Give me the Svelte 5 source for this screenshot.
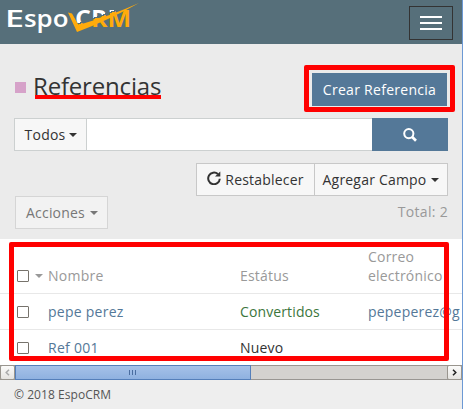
<script>
  const rows = [
    { name: 'pepe perez', status: 'Convertidos', done: true, email: 'pepeperez@g' },
    { name: 'Ref 001', status: 'Nuevo', done: false, email: '' }
  ];
</script>

<div class="app">
  <header>
    <svg class="logo" width="140" height="36" viewBox="0 0 140 36">
      <defs>
        <linearGradient id="split" gradientUnits="userSpaceOnUse" x1="102.4" y1="7.6" x2="107.6" y2="22.4">
          <stop offset="0.42" stop-color="#fff" />
          <stop offset="0.42" stop-color="#566f7a" />
          <stop offset="0.5" stop-color="#566f7a" />
          <stop offset="0.5" stop-color="#ffab0b" />
        </linearGradient>
      </defs>
      <text x="5" y="26.5" textLength="19" lengthAdjust="spacingAndGlyphs" class="word">E</text>
      <text x="24" y="26.5" textLength="44.5" lengthAdjust="spacingAndGlyphs" class="word small">spo</text>
      <text x="75" y="27" textLength="56" lengthAdjust="spacingAndGlyphs" class="word crm" fill="url(#split)">CRM</text>
      <path d="M68 12.5 L72 13.5 L78.5 25 Q110 16 139 3 Q109 20 77 32 Z" fill="#ffab0b" />
    </svg>
    <button class="menu" aria-label="Menu"><i></i><i></i><i></i></button>
  </header>

  <main>
    <div class="heading">
      <span class="square"></span>
      <h1>Referencias</h1>
      <button class="btn primary create">Crear Referencia</button>
    </div>

    <div class="search">
      <button class="btn todos">Todos<b class="caret"></b></button>
      <input aria-label="Buscar" />
      <button class="btn primary find" aria-label="Buscar">
        <svg width="14" height="14" viewBox="0 0 14 14" fill="none" stroke="#fff">
          <circle cx="5.8" cy="5.6" r="4.6" stroke-width="2" />
          <path d="M9.2 9 L13 12.8" stroke-width="2.7" />
        </svg>
      </button>
    </div>

    <div class="filters">
      <button class="btn reset">
        <svg width="14" height="14" viewBox="0 0 14 14">
          <path d="M10.9 3.1 A5.8 5.8 0 1 0 12.8 7.8" fill="none" stroke="#333" stroke-width="2" />
          <path d="M13.3 0.4 V5.6 H8 Z" fill="#333" />
        </svg>
        <span>Restablecer</span>
      </button>
      <button class="btn add">Agregar Campo<b class="caret"></b></button>
    </div>

    <div class="actions">
      <button class="btn muted">Acciones<b class="caret"></b></button>
      <span class="total">Total: 2</span>
    </div>
  </main>

  <section class="list">
    <div class="row head">
      <span class="check"><i class="box"></i><b class="caret"></b></span>
      <span class="name">Nombre</span>
      <span class="status">Estátus</span>
      <span class="email">Correo<br />electrónico</span>
    </div>
    {#each rows as r}
      <div class="row">
        <span class="check"><i class="box"></i></span>
        <span class="name link">{r.name}</span>
        <span class="status" class:done={r.done}>{r.status}</span>
        <span class="email link">{r.email}</span>
      </div>
    {/each}
  </section>

  <div class="scrollbar">
    <span class="arrow left"><svg width="5" height="7" viewBox="0 0 5 7"><path d="M4 .7 L1.2 3.5 L4 6.3" /></svg></span>
    <span class="thumb"><i></i><i></i><i></i></span>
    <span class="arrow right"><svg width="5" height="7" viewBox="0 0 5 7"><path d="M1 .7 L3.8 3.5 L1 6.3" /></svg></span>
  </div>

  <footer>© 2018 EspoCRM</footer>

  <div class="edge"></div>
  <div class="mark underline"></div>
  <div class="mark frame-button"></div>
  <div class="mark frame-list"></div>
</div>

<style>
  :global(body) { margin: 0; }
  .app {
    position: relative;
    display: flex;
    flex-direction: column;
    width: 463px;
    height: 409px;
    box-sizing: border-box;
    overflow: hidden;
    background: #ebebeb;
    color: #333;
    font: 14px/19px "Open Sans", sans-serif;
    letter-spacing: 0.2px;
  }
  .app * { box-sizing: border-box; }
  button, input { font: inherit; letter-spacing: inherit; margin: 0; border-radius: 0; }
  header {
    flex: none;
    display: flex;
    justify-content: space-between;
    height: 44px;
    padding: 0 10px 0 0;
    background: #566f7a;
  }
  .word { font: 600 24px "Open Sans", sans-serif; letter-spacing: 0; fill: #fff; }
  .small { font-size: 23px; }
  .crm { font-weight: 700; fill: url(#split); }
  .menu {
    display: flex;
    flex-direction: column;
    align-items: center;
    gap: 4px;
    width: 44px;
    height: 34px;
    margin-top: 6px;
    padding: 9px 0 0;
    border: 1px solid #333;
    background: none;
  }
  .menu i { width: 22px; height: 2px; background: #fff; }
  main { flex: none; height: 195px; padding: 29px 15px 0 14px; }
  .heading { display: flex; height: 33px; padding-right: 1px; }
  .square { width: 11px; height: 11px; margin: 9px 7px 0 1px; background: #d6a2c9; }
  h1 { margin: -5px 0 0; font-size: 24px; line-height: 35px; font-weight: 400; letter-spacing: -0.18px; }
  .btn {
    display: flex;
    align-items: center;
    justify-content: center;
    height: 33px;
    padding: 0;
    border: 1px solid #c8c8c8;
    background: #f7f7f7;
    color: #333;
    white-space: nowrap;
  }
  .primary { border: 0; background: #547898; color: #fff; }
  .create { width: 135px; margin-left: auto; letter-spacing: 0.28px; }
  .caret {
    flex: none;
    width: 0;
    height: 0;
    margin-left: 5px;
    border: 4px solid transparent;
    border-top-color: currentColor;
    border-bottom: 0;
  }
  .search { display: flex; margin-top: 12px; }
  .todos { width: 73px; padding-left: 1px; border-color: #ccd0d0; }
  .todos .caret { margin-left: 4px; }
  .search input {
    width: 285px;
    height: 33px;
    padding: 0 8px;
    border: 1px solid #ccd0d0;
    border-width: 1px 0;
    background: #fff;
    outline: 0;
  }
  .find { width: 76px; }
  .filters { display: flex; justify-content: flex-end; margin-top: 12px; }
  .reset { width: 119px; gap: 4px; }
  .reset svg { margin-top: -3px; }
  .add { width: 134px; margin-left: -1px; }
  .actions { display: flex; justify-content: space-between; padding-left: 1px; }
  .muted { width: 93px; padding-left: 1px; background: #f2f2f2; border-color: #d5d5d5; color: #777; }
  .total { margin-top: 6px; color: #999; letter-spacing: 0.3px; }
  .list { flex: none; height: 126px; background: #fff; overflow: hidden; }
  .row { display: flex; align-items: center; width: 463px; height: 36px; border-bottom: 1px solid #e8e8e8; }
  .row:last-child { height: 35px; border: 0; }
  .head { align-items: flex-end; height: 55px; padding-bottom: 8px; color: #999; }
  .check { display: flex; align-items: center; width: 48px; height: 19px; padding-left: 17px; }
  .box { width: 12px; height: 12px; border: 1px solid #77736c; border-radius: 1px; background: #fff; }
  .check .caret { margin-left: 6px; }
  .name { width: 192px; letter-spacing: 0.26px; }
  .status { width: 128px; }
  .link { color: #547898; }
  .done { color: #3c763d; letter-spacing: 0.12px; }
  .scrollbar { flex: none; display: flex; height: 15px; border: 1px solid #999692; border-width: 1px 0; background: #d4d2cf; }
  .arrow {
    display: flex;
    align-items: center;
    justify-content: center;
    width: 15px;
    height: 15px;
    margin-top: -1px;
    border: 1px solid #99958e;
    border-radius: 2px;
    background: linear-gradient(#fbfbfa, #e5e3e0);
  }
  .arrow path { fill: none; stroke: #aaa; stroke-width: 1.5; }
  .right { margin-left: auto; margin-right: 1px; }
  .right path { stroke: #222; }
  .thumb {
    display: flex;
    align-items: center;
    justify-content: center;
    gap: 2px;
    width: 236px;
    height: 15px;
    margin-top: -1px;
    border: 1px solid #557fba;
    background: linear-gradient(#a6c1e8, #8fb1e0);
  }
  .thumb i { width: 1px; height: 5px; background: #4a6da0; }
  .thumb i:last-child { margin-right: 2px; }
  footer { flex: 1; padding: 5px 14px; border-bottom: 1px solid #e0e0e0; background: #eee; color: #555; font-size: 12px; letter-spacing: 0.05px; }
  .edge { position: absolute; top: 0; right: 0; width: 1px; height: 409px; background: #6c99d4; }
  .mark { position: absolute; border-radius: 2px; pointer-events: none; }
  .underline { left: 35px; top: 95px; width: 126px; height: 4px; border-radius: 0; background: #f00; }
  .frame-button { left: 304px; top: 65px; width: 151px; height: 47px; border: 5px solid #f00; }
  .frame-list { left: 9px; top: 242px; width: 440px; height: 119px; border: 5px solid #f00; }
</style>
